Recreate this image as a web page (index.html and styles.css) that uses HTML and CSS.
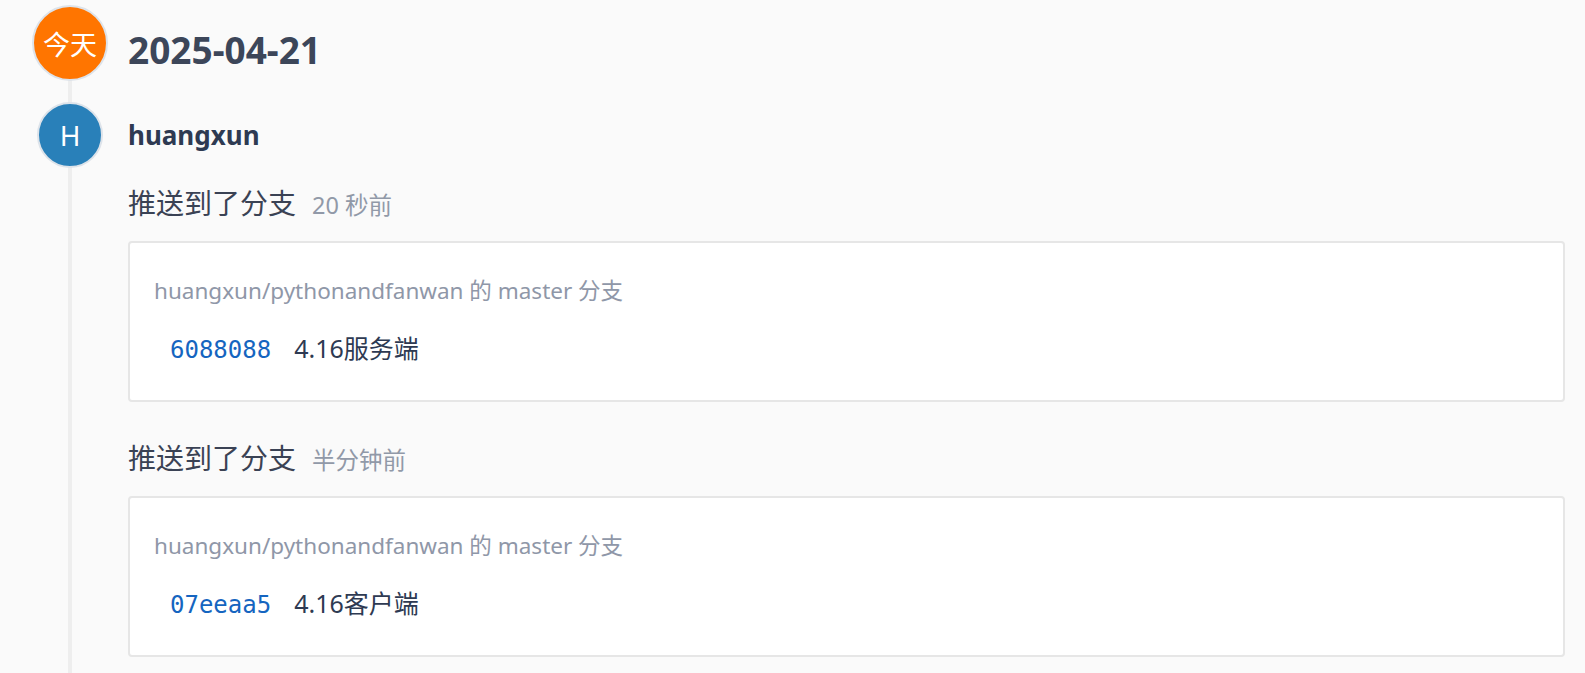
FILE: index.html
```html
<!DOCTYPE html>
<html lang="zh-CN">
<head>
<meta charset="utf-8">
<title>动态</title>
<link rel="stylesheet" href="styles.css">
</head>
<body>
<div class="timeline">
  <div class="row day-row">
    <div class="avatar-col"><div class="badge badge-today">今天</div></div>
    <h2 class="day-title">2025-04-21</h2>
  </div>
  <div class="row user-row">
    <div class="avatar-col"><div class="badge badge-user">H</div></div>
    <div class="user-name">huangxun</div>
  </div>

  <div class="event">
    <div class="event-head"><span class="event-action">推送到了分支</span><span class="event-time">20 秒前</span></div>
    <div class="card">
      <div class="card-repo">huangxun/pythonandfanwan 的 master 分支</div>
      <div class="commit"><span class="commit-hash">6088088</span><span class="commit-msg">4.16服务端</span></div>
    </div>
  </div>

  <div class="event">
    <div class="event-head"><span class="event-action">推送到了分支</span><span class="event-time">半分钟前</span></div>
    <div class="card">
      <div class="card-repo">huangxun/pythonandfanwan 的 master 分支</div>
      <div class="commit"><span class="commit-hash">07eeaa5</span><span class="commit-msg">4.16客户端</span></div>
    </div>
  </div>
</div>
</body>
</html>
```
FILE: styles.css
```css
html, body {
  margin: 0;
  padding: 0;
  background: #fafafa;
  font-family: "Noto Sans", "Open Sans", "Noto Sans CJK SC", sans-serif;
  overflow: hidden;
}

.timeline {
  position: relative;
  padding: 5px 20px 40px 32px;
}

.timeline::before {
  content: "";
  position: absolute;
  left: 68px;
  top: 60px;
  bottom: 0;
  width: 4px;
  background: #eeeeee;
}

.row {
  position: relative;
  display: flex;
  align-items: center;
  gap: 20px;
}

.avatar-col {
  width: 76px;
  display: flex;
  justify-content: center;
  flex: none;
}

.badge {
  box-sizing: border-box;
  border-radius: 50%;
  border: 2px solid #dde3ea;
  color: #fff;
  display: flex;
  align-items: center;
  justify-content: center;
}

.badge-today {
  width: 76px;
  height: 76px;
  background: #ff7500;
  font-size: 27px;
  font-family: "Noto Sans CJK SC", sans-serif;
}

.badge-user {
  width: 66px;
  height: 66px;
  background: #2980b9;
  font-size: 28px;
}

.day-title {
  margin: 13px 0 0;
  font-size: 37px;
  font-weight: 700;
  line-height: 1;
  color: #3c4659;
}

.user-row {
  margin-top: 21px;
}

.user-name {
  font-size: 26px;
  font-weight: 700;
  color: #2e3a52;
  margin-top: 0;
}

.event {
  padding-left: 96px;
}

.event-head {
  display: flex;
  align-items: baseline;
  gap: 16px;
  margin-top: 14px;
  line-height: 40px;
}

.event + .event .event-head {
  margin-top: 35px;
}

.event-action {
  font-family: "Noto Sans CJK SC", sans-serif;
  font-size: 28px;
  color: #3a4254;
}

.event-time {
  font-size: 23.5px;
  color: #9199a8;
  font-family: "Noto Sans", "Noto Sans CJK SC", sans-serif;
}

.card {
  margin-top: 16px;
  background: #fff;
  border: 2px solid #e6e6e6;
  border-radius: 4px;
  height: 161px;
  box-sizing: border-box;
  padding: 30px 24px 0;
}

.card-repo {
  font-size: 22.5px;
  color: #8f97a8;
  line-height: 36px;
}

.commit {
  display: flex;
  align-items: baseline;
  gap: 23px;
  margin-top: 21px;
  padding-left: 16px;
  line-height: 36px;
}

.commit-hash {
  font-family: "DejaVu Sans Mono", monospace;
  font-size: 24px;
  color: #1565c0;
}

.commit-msg {
  font-size: 25px;
  color: #2e3a52;
}
```
